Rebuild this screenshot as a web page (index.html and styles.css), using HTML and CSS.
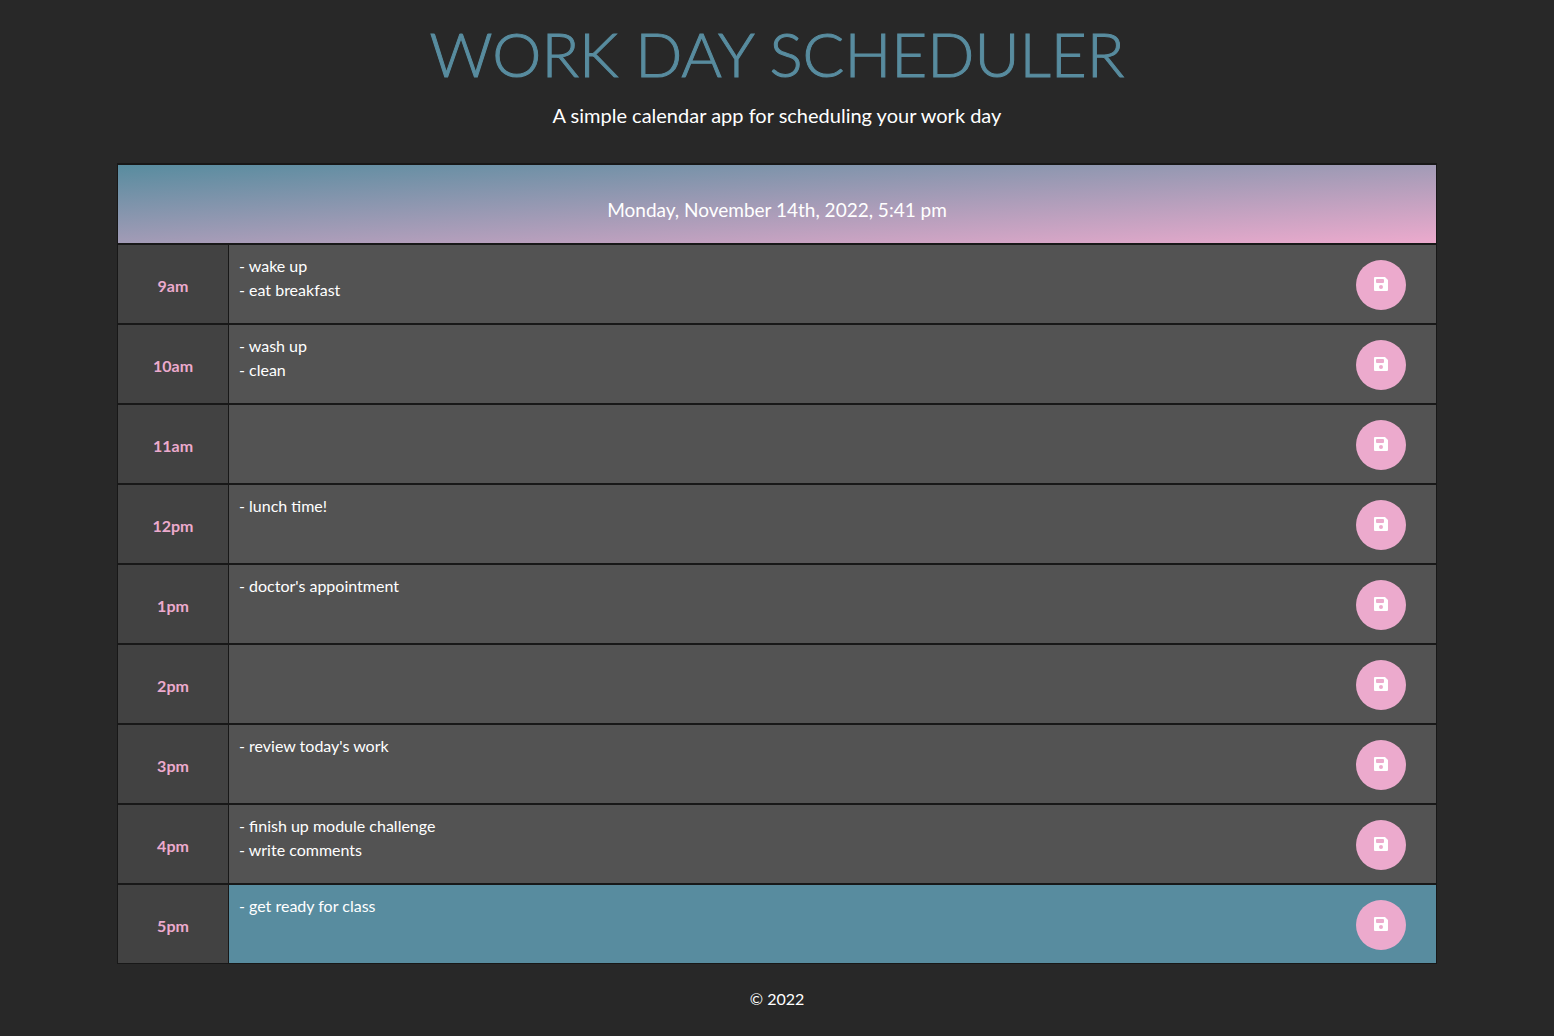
FILE: index.html
```html
<!DOCTYPE html>
<html lang="en">
<head>
<meta charset="UTF-8">
<meta name="viewport" content="width=device-width, initial-scale=1">
<title>Work Day Scheduler</title>
<link rel="stylesheet" href="styles.css">
</head>
<body>
<svg class="sprite" aria-hidden="true">
<symbol id="save" viewBox="0 0 14 14"><path fill-rule="evenodd" d="M1 0H11L14 3V13Q14 14 13 14H1Q0 14 0 13V1Q0 0 1 0ZM3 2Q2 2 2 3V5Q2 6 3 6H9Q10 6 10 5V3Q10 2 9 2ZM7 8A2 2 0 1 0 7 12A2 2 0 1 0 7 8Z"/></symbol>
</svg>
<header class="intro">
<h1 class="title">WORK DAY SCHEDULER</h1>
<p class="lead">A simple calendar app for scheduling your work day</p>
</header>
<main class="planner">
<p class="today">Monday, November 14th, 2022, 5:41 pm</p>
<div class="row"><label class="hour" for="h9">9am</label><textarea class="entry" id="h9">- wake up
- eat breakfast</textarea><div class="action"><button class="save" aria-label="Save 9am"><svg class="icon"><use href="#save"/></svg></button></div></div>
<div class="row"><label class="hour" for="h10">10am</label><textarea class="entry" id="h10">- wash up
- clean</textarea><div class="action"><button class="save" aria-label="Save 10am"><svg class="icon"><use href="#save"/></svg></button></div></div>
<div class="row"><label class="hour" for="h11">11am</label><textarea class="entry" id="h11"></textarea><div class="action"><button class="save" aria-label="Save 11am"><svg class="icon"><use href="#save"/></svg></button></div></div>
<div class="row"><label class="hour" for="h12">12pm</label><textarea class="entry" id="h12">- lunch time!</textarea><div class="action"><button class="save" aria-label="Save 12pm"><svg class="icon"><use href="#save"/></svg></button></div></div>
<div class="row"><label class="hour" for="h13">1pm</label><textarea class="entry" id="h13">- doctor's appointment</textarea><div class="action"><button class="save" aria-label="Save 1pm"><svg class="icon"><use href="#save"/></svg></button></div></div>
<div class="row"><label class="hour" for="h14">2pm</label><textarea class="entry" id="h14"></textarea><div class="action"><button class="save" aria-label="Save 2pm"><svg class="icon"><use href="#save"/></svg></button></div></div>
<div class="row"><label class="hour" for="h15">3pm</label><textarea class="entry" id="h15">- review today's work</textarea><div class="action"><button class="save" aria-label="Save 3pm"><svg class="icon"><use href="#save"/></svg></button></div></div>
<div class="row"><label class="hour" for="h16">4pm</label><textarea class="entry" id="h16">- finish up module challenge
- write comments</textarea><div class="action"><button class="save" aria-label="Save 4pm"><svg class="icon"><use href="#save"/></svg></button></div></div>
<div class="row present"><label class="hour" for="h17">5pm</label><textarea class="entry" id="h17">- get ready for class</textarea><div class="action"><button class="save" aria-label="Save 5pm"><svg class="icon"><use href="#save"/></svg></button></div></div>
</main>
<footer class="footer">© 2022</footer>
</body>
</html>
```
FILE: styles.css
```css
* { box-sizing: border-box; }

body {
  margin: 0;
  background: #282828;
  color: #fff;
  font: 400 16px/24px Lato, sans-serif;
}

.sprite { display: none; }

.intro {
  padding: 15px 16px 32px;
  text-align: center;
}

.title {
  margin: 0 0 9px;
  color: #588c9f;
  font-size: 62px;
  font-weight: 300;
  line-height: 76px;
  -webkit-text-stroke: 1px #588c9f;
}

.lead {
  margin: 0;
  font-size: 20px;
  line-height: 31px;
}

.planner {
  width: 85%;
  max-width: 1320px;
  margin: 0 auto;
  border: 1px solid #181818;
  border-bottom: 0;
}

.today {
  display: flex;
  align-items: center;
  justify-content: center;
  min-height: 80px;
  margin: 0;
  padding-top: 12px;
  border: solid #181818;
  border-width: 1px 0;
  background: linear-gradient(to bottom right, #588c9f, #ecaacd);
  font-size: 19px;
}

.row {
  display: grid;
  grid-template-columns: 111px 1fr 110px;
  min-height: 80px;
  border: solid #181818;
  border-width: 1px 0;
  background: #535353;
}

.hour {
  display: flex;
  align-items: center;
  justify-content: center;
  padding-top: 4px;
  border-right: 1px solid #181818;
  background: #424242;
  color: #ecaacd;
  font-weight: 700;
}

.entry {
  display: block;
  padding: 9px 10px;
  border: 0;
  outline: 0;
  background: none;
  color: inherit;
  font: inherit;
  resize: none;
}

.present { background: #588c9f; }

.action {
  display: flex;
  align-items: center;
  justify-content: flex-end;
  padding: 2px 30px 0 0;
}

.save {
  display: flex;
  align-items: center;
  justify-content: center;
  width: 50px;
  height: 50px;
  padding: 0 0 2px;
  border: 0;
  border-radius: 50%;
  background: #ecaacd;
  color: #fff;
  cursor: pointer;
}

.icon {
  width: 14px;
  height: 14px;
  fill: currentColor;
}

.footer {
  padding: 23px 16px;
  text-align: center;
}
```
